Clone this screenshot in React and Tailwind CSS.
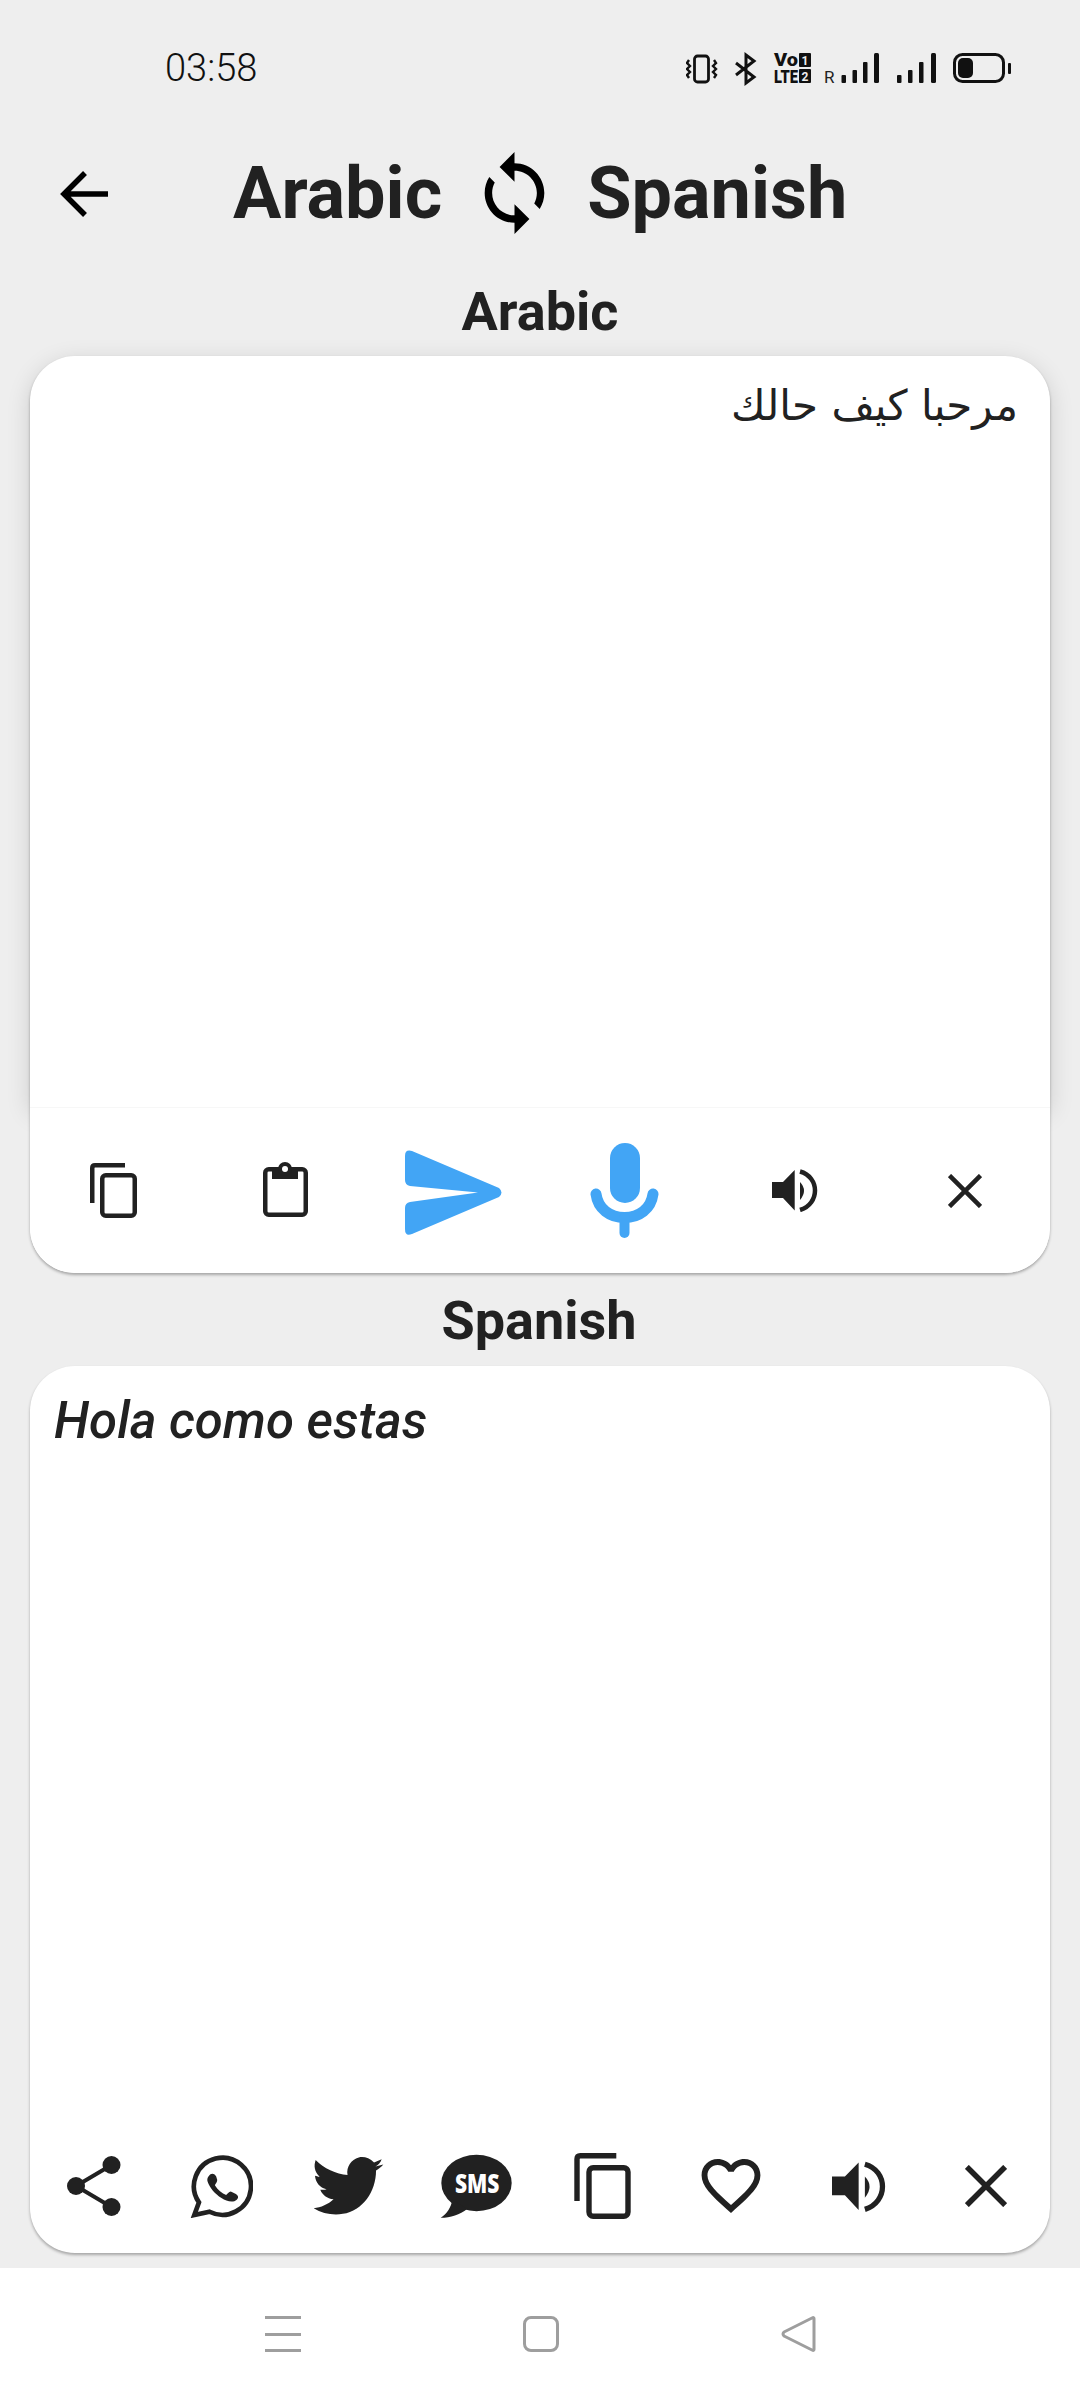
import React from 'react'

const BLUE = '#42a5f5'
const INK = '#212121'
const GREY = '#9e9e9e'

function StatusIcons() {
  return (
    <svg width="326" height="36" viewBox="686 50 326 36" fill="#111">
      {/* vibrate */}
      <rect x="694.5" y="56" width="14" height="26" rx="3" fill="none" stroke="#111" strokeWidth="2.8" />
      <path d="M689 60l-2 3 3 3-3 3 3 3-3 3 2 3M714 60l2 3-3 3 3 3-3 3 3 3-2 3" fill="none" stroke="#111" strokeWidth="2.4" />
      {/* bluetooth */}
      <path d="M736 63l18 14-8 6V55l8 6-18 14" fill="none" stroke="#111" strokeWidth="3" />
      {/* volte */}
      <text x="774" y="66" fontFamily="Roboto" fontWeight="900" fontSize="18" textLength="24" lengthAdjust="spacingAndGlyphs">Vo</text>
      <text x="774" y="83" fontFamily="Roboto" fontWeight="900" fontSize="18" textLength="24" lengthAdjust="spacingAndGlyphs">LTE</text>
      <rect x="799" y="53" width="12" height="14" rx="1" />
      <rect x="799" y="69" width="12" height="14" rx="1" />
      <text x="805" y="65" fontFamily="Roboto" fontWeight="700" fontSize="12" fill="#eee" textAnchor="middle">1</text>
      <text x="805" y="81" fontFamily="Roboto" fontWeight="700" fontSize="12" fill="#eee" textAnchor="middle">2</text>
      {/* signal */}
      <text x="824" y="83" fontFamily="Roboto" fontWeight="400" fontSize="17" fill="#222">R</text>
      <rect x="841.5" y="75" width="4.5" height="8" rx="1" />
      <rect x="852.5" y="70" width="4.5" height="13" rx="1" />
      <rect x="863" y="62" width="4.5" height="21" rx="1" />
      <rect x="874" y="53" width="5" height="30" rx="1.5" />
      <rect x="897" y="75" width="4.5" height="8" rx="1" />
      <rect x="908" y="70" width="4.5" height="13" rx="1" />
      <rect x="919" y="62" width="4.5" height="21" rx="1" />
      <rect x="931" y="53" width="5" height="30" rx="1.5" />
      {/* battery */}
      <rect x="954.5" y="54.5" width="49" height="27" rx="8" fill="none" stroke="#111" strokeWidth="3" />
      <rect x="958" y="58" width="15" height="20" rx="5" />
      <rect x="1008" y="63" width="3" height="11" rx="1" />
    </svg>
  )
}

function CopyIcon({ w, h }) {
  return (
    <svg width={w} height={h} viewBox="0 0 47 55" fill="none" stroke={INK} strokeWidth="4.5" className="shrink-0">
      <path d="M2.25 40V5q0-2.75 2.75-2.75H35" />
      <rect x="12.25" y="12.25" width="32.5" height="40.5" rx="3.5" />
    </svg>
  )
}

function ClipboardIcon() {
  return (
    <svg width="45" height="55" viewBox="0 0 45 55" className="shrink-0 mb-[3px]">
      <rect x="2.25" y="7.25" width="40.5" height="45.5" rx="3.5" fill="none" stroke={INK} strokeWidth="4.5" />
      <rect x="9" y="5" width="26" height="12" fill={INK} />
      <circle cx="22" cy="7" r="7" fill={INK} />
      <circle cx="22" cy="7" r="3" fill="#fff" />
    </svg>
  )
}

function SendIcon() {
  return (
    <svg width="97" height="85" viewBox="0 0 97 85" fill={BLUE} className="shrink-0 mt-[3px]">
      <path d="M0 6Q0-1 7 1L94 38Q99 42.5 94 47L7 84Q0 87 0 79V58Q0 53 5 52L73 42.5 5 36Q0 35 0 30Z" />
    </svg>
  )
}

function MicIcon() {
  return (
    <svg width="69" height="95" viewBox="0 0 69 95" fill="none" stroke={BLUE} className="shrink-0">
      <rect x="20" y="0" width="30" height="60" rx="15" fill={BLUE} stroke="none" />
      <path d="M6 51C8 66 20 74.500 34.500 74.500S61 66 63 51" strokeWidth="11" strokeLinecap="round" />
      <path d="M34.500 75V90" strokeWidth="10" strokeLinecap="round" />
    </svg>
  )
}

function VolumeIcon({ w, h }) {
  return (
    <svg width={w} height={h} viewBox="0 0 46 43" fill={INK} className="shrink-0">
      <path d="M0 13H11L22.700 1V41.500L11 29H0Z" />
      <path d="M28 13Q36 21.500 28 31Z" />
      <path d="M28 2.500C48 8 48 35 28 41" fill="none" stroke={INK} strokeWidth="4.500" />
    </svg>
  )
}

function CloseIcon({ size }) {
  return (
    <svg width={size} height={size} viewBox="0 0 34 34" fill="none" stroke={INK} strokeWidth="4.500" className="shrink-0">
      <path d="M1.500 1.500L32.500 32.500M32.500 1.500L1.500 32.500" />
    </svg>
  )
}

function ShareIcon() {
  return (
    <svg width="54" height="60" viewBox="0 0 54 60" fill={INK} className="shrink-0">
      <path d="M44.500 9L9 30L44.500 51" fill="none" stroke={INK} strokeWidth="4" />
      <circle cx="9" cy="30" r="9" />
      <circle cx="44.500" cy="9" r="9" />
      <circle cx="44.500" cy="51" r="9" />
    </svg>
  )
}

function WhatsappIcon() {
  return (
    <svg width="63" height="63" viewBox="25 25 190 190" className="shrink-0">
      <path d="M52 168L38 206L84 196A86 86 0 1 0 52 168Z" fill="none" stroke={INK} strokeWidth="14" />
      <path fill={INK} d="M82 88C88 78 100 80 104 90L107 100C108 106 102 112 100 116C108 130 122 140 134 146C138 142 142 136 148 135L162 142C172 148 172 155 166 160C155 170 135 165 120 155C100 142 85 125 78 105C76 98 78 92 82 88Z" />
    </svg>
  )
}

function TwitterIcon() {
  return (
    <svg width="71" height="60" viewBox="400 33 214 180" fill={INK} className="shrink-0">
      <path d="M607 42L584 52C570 38 552 33 538 37C515 43 500 65 504 90C470 88 432 70 408 45C402 62 404 80 420 95C414 95 410 93 406 92C408 112 420 128 441 133C435 135 428 135 422 134C428 150 442 160 462 163C446 178 424 188 402 190C428 206 460 212 490 207C550 197 590 140 590 76C598 72 606 65 612 58L588 64C597 60 604 51 607 42Z" />
    </svg>
  )
}

function SmsIcon() {
  return (
    <svg width="73" height="65" viewBox="28 23 220 195" className="shrink-0">
      <ellipse cx="138" cy="110" rx="106" ry="85" fill={INK} />
      <path d="M65 160C62 185 48 203 30 215C60 215 88 205 110 188Z" fill={INK} />
      <text x="73" y="139" fill="#fff" fontFamily="'Open Sans'" fontWeight="800" fontSize="78" textLength="134" lengthAdjust="spacingAndGlyphs">SMS</text>
    </svg>
  )
}

function HeartIcon() {
  return (
    <svg width="60" height="54" viewBox="2 3 20 18.350" fill={INK} className="shrink-0">
      <path d="M16.500 3c-1.740 0-3.410.810-4.500 2.090C10.910 3.810 9.240 3 7.500 3 4.420 3 2 5.420 2 8.500c0 3.780 3.400 6.860 8.550 11.540L12 21.350l1.450-1.320C18.600 15.360 22 12.280 22 8.500 22 5.420 19.580 3 16.500 3zm-4.400 15.550l-.1.100-.1-.100C7.140 14.240 4 11.390 4 8.500 4 6.500 5.500 5 7.500 5c1.540 0 3.040.990 3.570 2.360h1.870C13.460 5.990 14.960 5 16.500 5c2 0 3.500 1.500 3.500 3.500 0 2.890-3.140 5.740-7.900 10.050z" />
    </svg>
  )
}

function Card({ className, children }) {
  return (
    <div className={`mx-[30px] flex flex-col rounded-[45px] bg-white shadow-[0_2px_3px_rgba(0,0,0,0.3)] ${className}`}>
      {children}
    </div>
  )
}

export default function App() {
  return (
    <div className="flex h-[2400px] w-[1080px] flex-col overflow-hidden bg-[#eeeeee] font-['Roboto',sans-serif] text-[#212121]">

      {/* Status bar */}
      <div className="flex h-[136px] items-center justify-between pl-[165px] pr-[68px]">
        <span className="text-[38px] font-light leading-none text-[#111]">03:58</span>
        <StatusIcons />
      </div>

      {/* Header */}
      <div className="flex h-[114px] items-center pl-[60px]">
        <svg width="48" height="46" viewBox="0 0 48 46" fill="none" stroke="#000" strokeWidth="5.500" className="mt-[2px] shrink-0">
          <path d="M48 23H4M25 2L4 23L25 44" />
        </svg>
        <span className="ml-[125px] pt-[1px] text-[72px] font-bold leading-none">Arabic</span>
        <svg width="61" height="82" viewBox="4 1 16 22" fill="#000" className="ml-[42px] shrink-0">
          <path d="M12 4V1L8 5l4 4V6c3.310 0 6 2.690 6 6 0 1.010-.250 1.970-.700 2.800l1.460 1.460C19.540 15.030 20 13.570 20 12c0-4.420-3.580-8-8-8zm0 14c-3.310 0-6-2.690-6-6 0-1.010.250-1.970.700-2.800L5.240 7.740C4.460 8.970 4 10.430 4 12c0 4.420 3.580 8 8 8v3l4-4-4-4v3z" />
        </svg>
        <span className="ml-[42px] pt-[1px] text-[72px] font-bold leading-none">Spanish</span>
      </div>

      {/* Source */}
      <div className="flex h-[106px] items-center justify-center pt-[17px] text-[54px] font-bold leading-none">Arabic</div>
      <Card className="h-[917px]">
        <div
          dir="rtl"
          className="h-[751px] rounded-t-[45px] px-[32px] pt-[20px] font-['DejaVu_Sans','Noto_Sans',sans-serif] text-[42px] leading-[60px] shadow-[0_6px_24px_rgba(0,0,0,0.14)]"
        >
          مرحبا كيف حالك
        </div>
        <div className="relative flex h-[166px] items-center rounded-b-[45px] border-t border-[#f7f7f7] bg-white pl-[60px]">
          <CopyIcon w={47} h={55} />
          <div className="ml-[126px] flex"><ClipboardIcon /></div>
          <div className="ml-[97px] flex"><SendIcon /></div>
          <div className="ml-[88px] flex"><MicIcon /></div>
          <div className="ml-[113px] flex"><VolumeIcon w={46} h={43} /></div>
          <div className="ml-[130px] flex"><CloseIcon size={34} /></div>
        </div>
      </Card>

      {/* Translation */}
      <div className="flex h-[93px] items-center justify-center pr-[2px] pt-[3px] text-[54px] font-bold leading-none">Spanish</div>
      <Card className="h-[887px]">
        <div className="flex-1 px-[24px] pt-[24px] text-[51px] font-medium italic leading-[62px]">Hola como estas</div>
        <div className="flex h-[134px] items-center pl-[37px]">
          <ShareIcon />
          <div className="ml-[69px] flex"><WhatsappIcon /></div>
          <div className="ml-[60px] flex"><TwitterIcon /></div>
          <div className="ml-[56px] flex"><SmsIcon /></div>
          <div className="ml-[61px] flex"><CopyIcon w={57} h={66} /></div>
          <div className="ml-[70px] flex"><HeartIcon /></div>
          <div className="ml-[71px] flex"><VolumeIcon w={54} h={51} /></div>
          <div className="ml-[79px] flex"><CloseIcon size={42} /></div>
        </div>
      </Card>

      {/* Nav bar */}
      <div className="mt-[15px] flex h-[132px] items-start justify-center gap-[222px] bg-white pt-[48px]">
        <div className="flex h-[36px] w-[36px] flex-col justify-between">
          <div className="h-[3px] bg-[#9e9e9e]" />
          <div className="h-[3px] bg-[#9e9e9e]" />
          <div className="h-[3px] bg-[#9e9e9e]" />
        </div>
        <div className="h-[36px] w-[36px] rounded-[8px] border-[3px] border-[#9e9e9e]" />
        <svg width="35" height="36" viewBox="0 0 35 36" fill="none" stroke={GREY} strokeWidth="3" strokeLinejoin="round">
          <path d="M33 2.500V33.500Q33 35 31 34L3 20Q1 18 3 16L31 2Q33 1 33 2.500Z" />
        </svg>
      </div>
    </div>
  )
}
